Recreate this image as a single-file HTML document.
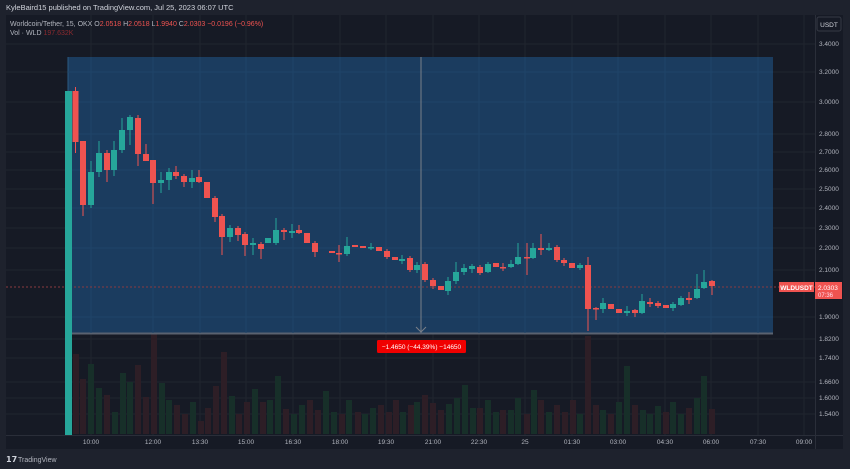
<!DOCTYPE html>
<html><head><meta charset="utf-8"><style>
html,body{margin:0;padding:0;background:#1e222d;width:850px;height:469px;overflow:hidden;font-family:"Liberation Sans",sans-serif}
svg{display:block}
</style></head><body>
<svg width="850" height="469" viewBox="0 0 850 469" xmlns="http://www.w3.org/2000/svg" font-family="Liberation Sans, sans-serif">
<rect width="850" height="469" fill="#1e222d"/>
<text x="6" y="10" font-size="7.5" fill="#d1d4dc">KyleBaird15 published on TradingView.com, Jul 25, 2023 06:07 UTC</text>
<rect x="6" y="15" width="837" height="434" fill="#161a25"/>
<g stroke="#20252f" stroke-width="1">
<line x1="6" y1="44" x2="815" y2="44"/><line x1="6" y1="72" x2="815" y2="72"/><line x1="6" y1="102" x2="815" y2="102"/><line x1="6" y1="134" x2="815" y2="134"/><line x1="6" y1="152" x2="815" y2="152"/><line x1="6" y1="170" x2="815" y2="170"/><line x1="6" y1="189" x2="815" y2="189"/><line x1="6" y1="208" x2="815" y2="208"/><line x1="6" y1="228" x2="815" y2="228"/><line x1="6" y1="248" x2="815" y2="248"/><line x1="6" y1="270" x2="815" y2="270"/><line x1="6" y1="317" x2="815" y2="317"/><line x1="6" y1="339" x2="815" y2="339"/><line x1="6" y1="358" x2="815" y2="358"/><line x1="6" y1="382" x2="815" y2="382"/><line x1="6" y1="398" x2="815" y2="398"/><line x1="6" y1="414" x2="815" y2="414"/>
<line x1="91" y1="15" x2="91" y2="435"/><line x1="153" y1="15" x2="153" y2="435"/><line x1="200" y1="15" x2="200" y2="435"/><line x1="246" y1="15" x2="246" y2="435"/><line x1="293" y1="15" x2="293" y2="435"/><line x1="340" y1="15" x2="340" y2="435"/><line x1="386" y1="15" x2="386" y2="435"/><line x1="433" y1="15" x2="433" y2="435"/><line x1="479" y1="15" x2="479" y2="435"/><line x1="525" y1="15" x2="525" y2="435"/><line x1="572" y1="15" x2="572" y2="435"/><line x1="618" y1="15" x2="618" y2="435"/><line x1="665" y1="15" x2="665" y2="435"/><line x1="711" y1="15" x2="711" y2="435"/><line x1="758" y1="15" x2="758" y2="435"/><line x1="804" y1="15" x2="804" y2="435"/>
</g>
<g fill="#2d1e26">
<rect x="73" y="354" width="6" height="80"/><rect x="80" y="379" width="6" height="55"/><rect x="104" y="395" width="6" height="39"/><rect x="135" y="365" width="6" height="69"/><rect x="143" y="397" width="6" height="37"/><rect x="151" y="330" width="6" height="104"/><rect x="174" y="405" width="6" height="29"/><rect x="182" y="414" width="6" height="20"/><rect x="198" y="421" width="6" height="13"/><rect x="205" y="408" width="6" height="26"/><rect x="213" y="386" width="6" height="48"/><rect x="221" y="352" width="6" height="82"/><rect x="236" y="414" width="6" height="20"/><rect x="244" y="402" width="6" height="32"/><rect x="260" y="402" width="6" height="32"/><rect x="283" y="409" width="6" height="25"/><rect x="307" y="400" width="6" height="34"/><rect x="315" y="410" width="6" height="24"/><rect x="339" y="414" width="6" height="20"/><rect x="355" y="412" width="6" height="22"/><rect x="378" y="405" width="6" height="29"/><rect x="386" y="412" width="6" height="22"/><rect x="393" y="400" width="6" height="34"/><rect x="408" y="405" width="6" height="29"/><rect x="422" y="395" width="6" height="39"/><rect x="430" y="403" width="6" height="31"/><rect x="438" y="410" width="6" height="24"/><rect x="477" y="408" width="6" height="26"/><rect x="500" y="410" width="6" height="24"/><rect x="524" y="414" width="6" height="20"/><rect x="538" y="400" width="6" height="34"/><rect x="554" y="405" width="6" height="29"/><rect x="562" y="412" width="6" height="22"/><rect x="570" y="400" width="6" height="34"/><rect x="585" y="336" width="6" height="98"/><rect x="593" y="405" width="6" height="29"/><rect x="608" y="414" width="6" height="20"/><rect x="632" y="405" width="6" height="29"/><rect x="663" y="412" width="6" height="22"/><rect x="686" y="408" width="6" height="26"/><rect x="709" y="409" width="6" height="25"/>
</g>
<g fill="#172f29">
<rect x="88" y="364" width="6" height="70"/><rect x="96" y="388" width="6" height="46"/><rect x="112" y="412" width="6" height="22"/><rect x="120" y="373" width="6" height="61"/><rect x="127" y="382" width="6" height="52"/><rect x="159" y="383" width="6" height="51"/><rect x="166" y="400" width="6" height="34"/><rect x="190" y="402" width="6" height="32"/><rect x="229" y="396" width="6" height="38"/><rect x="252" y="389" width="6" height="45"/><rect x="267" y="400" width="6" height="34"/><rect x="275" y="376" width="6" height="58"/><rect x="291" y="414" width="6" height="20"/><rect x="299" y="405" width="6" height="29"/><rect x="323" y="391" width="6" height="43"/><rect x="331" y="412" width="6" height="22"/><rect x="346" y="400" width="6" height="34"/><rect x="362" y="414" width="6" height="20"/><rect x="370" y="408" width="6" height="26"/><rect x="400" y="412" width="6" height="22"/><rect x="414" y="402" width="6" height="32"/><rect x="446" y="404" width="6" height="30"/><rect x="454" y="398" width="6" height="36"/><rect x="462" y="385" width="6" height="49"/><rect x="470" y="408" width="6" height="26"/><rect x="485" y="400" width="6" height="34"/><rect x="493" y="412" width="6" height="22"/><rect x="508" y="410" width="6" height="24"/><rect x="515" y="398" width="6" height="36"/><rect x="531" y="390" width="6" height="44"/><rect x="546" y="412" width="6" height="22"/><rect x="577" y="414" width="6" height="20"/><rect x="600" y="410" width="6" height="24"/><rect x="616" y="402" width="6" height="32"/><rect x="624" y="366" width="6" height="68"/><rect x="640" y="410" width="6" height="24"/><rect x="647" y="414" width="6" height="20"/><rect x="655" y="406" width="6" height="28"/><rect x="670" y="402" width="6" height="32"/><rect x="678" y="414" width="6" height="20"/><rect x="694" y="398" width="6" height="36"/><rect x="701" y="376" width="6" height="58"/>
</g>
<rect x="68" y="57" width="705" height="277" fill="#1b3c5f"/>
<line x1="68" y1="333.5" x2="773" y2="333.5" stroke="#5a6270" stroke-width="2"/>
<line x1="68" y1="57" x2="68" y2="335" stroke="#2b5a82"/>
<g stroke="#1f4468" stroke-width="1">
<line x1="68" y1="72" x2="773" y2="72"/><line x1="68" y1="102" x2="773" y2="102"/><line x1="68" y1="134" x2="773" y2="134"/><line x1="68" y1="170" x2="773" y2="170"/><line x1="68" y1="208" x2="773" y2="208"/><line x1="68" y1="248" x2="773" y2="248"/><line x1="68" y1="317" x2="773" y2="317"/>
<line x1="91" y1="57" x2="91" y2="333"/><line x1="153" y1="57" x2="153" y2="333"/><line x1="200" y1="57" x2="200" y2="333"/><line x1="246" y1="57" x2="246" y2="333"/><line x1="293" y1="57" x2="293" y2="333"/><line x1="340" y1="57" x2="340" y2="333"/><line x1="386" y1="57" x2="386" y2="333"/><line x1="479" y1="57" x2="479" y2="333"/><line x1="525" y1="57" x2="525" y2="333"/><line x1="572" y1="57" x2="572" y2="333"/><line x1="618" y1="57" x2="618" y2="333"/><line x1="665" y1="57" x2="665" y2="333"/><line x1="711" y1="57" x2="711" y2="333"/><line x1="758" y1="57" x2="758" y2="333"/>
</g>
<line x1="421" y1="57" x2="421" y2="333" stroke="#7a7f88" stroke-width="1"/>
<path d="M416 327 L421 332 L426 327" stroke="#7a7f88" fill="none"/>
<line x1="6" y1="287" x2="815" y2="287" stroke="#8a3a40" stroke-width="1" stroke-dasharray="2,2"/>
<g stroke="#26a69a" stroke-width="1">
<line x1="91" y1="161" x2="91" y2="208"/><line x1="99" y1="141" x2="99" y2="177"/><line x1="114" y1="141" x2="114" y2="176"/><line x1="122" y1="118" x2="122" y2="153"/><line x1="130" y1="115" x2="130" y2="145"/><line x1="161" y1="172" x2="161" y2="193"/><line x1="169" y1="168" x2="169" y2="190"/><line x1="192" y1="170" x2="192" y2="188"/><line x1="230" y1="225" x2="230" y2="242"/><line x1="253" y1="238" x2="253" y2="255"/><line x1="276" y1="218" x2="276" y2="245"/><line x1="292" y1="224" x2="292" y2="238"/><line x1="347" y1="237" x2="347" y2="256"/><line x1="371" y1="243" x2="371" y2="250"/><line x1="402" y1="255" x2="402" y2="264"/><line x1="417" y1="262" x2="417" y2="273"/><line x1="448" y1="277" x2="448" y2="295"/><line x1="456" y1="262" x2="456" y2="284"/><line x1="464" y1="264" x2="464" y2="275"/><line x1="472" y1="264" x2="472" y2="273"/><line x1="488" y1="262" x2="488" y2="273"/><line x1="511" y1="260" x2="511" y2="268"/><line x1="518" y1="243" x2="518" y2="265"/><line x1="533" y1="243" x2="533" y2="259"/><line x1="549" y1="243" x2="549" y2="251"/><line x1="580" y1="263" x2="580" y2="270"/><line x1="603" y1="298" x2="603" y2="313"/><line x1="627" y1="306" x2="627" y2="316"/><line x1="642" y1="294" x2="642" y2="314"/><line x1="673" y1="302" x2="673" y2="311"/><line x1="681" y1="296" x2="681" y2="306"/><line x1="697" y1="274" x2="697" y2="299"/><line x1="704" y1="270" x2="704" y2="289"/>
</g>
<g stroke="#ef5350" stroke-width="1">
<line x1="75.5" y1="87" x2="75.5" y2="153"/><line x1="83" y1="141" x2="83" y2="216"/><line x1="107" y1="150" x2="107" y2="182"/><line x1="138" y1="115" x2="138" y2="166"/><line x1="146" y1="144" x2="146" y2="161"/><line x1="153" y1="160" x2="153" y2="204"/><line x1="176" y1="166" x2="176" y2="179"/><line x1="184" y1="174" x2="184" y2="187"/><line x1="199" y1="170" x2="199" y2="183"/><line x1="215" y1="196" x2="215" y2="222"/><line x1="222" y1="214" x2="222" y2="255"/><line x1="238" y1="226" x2="238" y2="241"/><line x1="245" y1="232" x2="245" y2="256"/><line x1="261" y1="242" x2="261" y2="259"/><line x1="284" y1="228" x2="284" y2="240"/><line x1="299" y1="225" x2="299" y2="234"/><line x1="315" y1="241" x2="315" y2="257"/><line x1="339" y1="245" x2="339" y2="262"/><line x1="387" y1="249" x2="387" y2="259"/><line x1="410" y1="256" x2="410" y2="272"/><line x1="425" y1="262" x2="425" y2="282"/><line x1="433" y1="278" x2="433" y2="289"/><line x1="480" y1="265" x2="480" y2="275"/><line x1="503" y1="263" x2="503" y2="271"/><line x1="527" y1="243" x2="527" y2="275"/><line x1="541" y1="234" x2="541" y2="255"/><line x1="557" y1="245" x2="557" y2="262"/><line x1="564" y1="258" x2="564" y2="266"/><line x1="588" y1="257" x2="588" y2="331"/><line x1="596" y1="307" x2="596" y2="320"/><line x1="635" y1="309" x2="635" y2="317"/><line x1="650" y1="298" x2="650" y2="307"/><line x1="658" y1="301" x2="658" y2="308"/><line x1="689" y1="292" x2="689" y2="304"/><line x1="712" y1="280" x2="712" y2="295"/>
</g>
<g fill="#26a69a">
<rect x="65" y="91" width="7" height="344"/>
<rect x="88" y="172" width="6" height="33"/><rect x="96" y="153" width="6" height="19"/><rect x="111" y="150" width="6" height="20"/><rect x="119" y="130" width="6" height="20"/><rect x="127" y="117" width="6" height="13"/><rect x="158" y="180" width="6" height="3"/><rect x="166" y="172" width="6" height="8"/><rect x="189" y="178" width="6" height="4"/><rect x="227" y="228" width="6" height="9"/><rect x="250" y="243" width="6" height="2"/><rect x="265" y="238" width="6" height="5"/><rect x="273" y="230" width="6" height="13"/><rect x="289" y="231" width="6" height="2"/><rect x="344" y="246" width="6" height="8"/><rect x="368" y="247" width="6" height="1.5"/><rect x="399" y="259" width="6" height="2"/><rect x="414" y="265" width="6" height="5"/><rect x="445" y="281" width="6" height="10"/><rect x="453" y="272" width="6" height="9"/><rect x="461" y="268" width="6" height="4"/><rect x="469" y="266" width="6" height="3"/><rect x="485" y="264" width="6" height="8"/><rect x="508" y="264" width="6" height="3"/><rect x="515" y="257" width="6" height="7"/><rect x="530" y="248" width="6" height="10"/><rect x="546" y="248" width="6" height="2"/><rect x="577" y="265" width="6" height="3"/><rect x="600" y="303" width="6" height="6"/><rect x="624" y="311" width="6" height="2"/><rect x="639" y="301" width="6" height="12"/><rect x="670" y="304" width="6" height="4"/><rect x="678" y="298" width="6" height="7"/><rect x="694" y="289" width="6" height="9"/><rect x="701" y="282" width="6" height="6"/>
</g>
<g fill="#ef5350">
<rect x="72.5" y="91" width="6" height="51"/><rect x="80" y="141" width="6" height="64"/><rect x="104" y="153" width="6" height="17"/><rect x="135" y="118" width="6" height="36"/><rect x="143" y="154" width="6" height="7"/><rect x="150" y="160" width="6" height="23"/><rect x="173" y="172" width="6" height="4"/><rect x="181" y="176" width="6" height="6"/><rect x="196" y="177" width="6" height="5"/><rect x="204" y="182" width="6" height="16"/><rect x="212" y="198" width="6" height="19"/><rect x="219" y="216" width="6" height="21"/><rect x="235" y="228" width="6" height="7"/><rect x="242" y="234" width="6" height="11"/><rect x="258" y="244" width="6" height="5"/><rect x="281" y="230" width="6" height="2"/><rect x="296" y="230" width="6" height="3"/><rect x="304" y="233" width="6" height="10"/><rect x="312" y="243" width="6" height="9"/><rect x="329" y="251" width="6" height="2"/><rect x="336" y="253" width="6" height="1.5"/><rect x="352" y="245" width="6" height="2"/><rect x="360" y="246" width="6" height="2"/><rect x="376" y="247" width="6" height="4"/><rect x="384" y="251" width="6" height="6"/><rect x="392" y="257" width="6" height="3"/><rect x="407" y="258" width="6" height="12"/><rect x="422" y="264" width="6" height="16"/><rect x="430" y="280" width="6" height="6"/><rect x="438" y="286" width="6" height="4"/><rect x="477" y="267" width="6" height="6"/><rect x="493" y="263" width="6" height="4"/><rect x="500" y="267" width="6" height="1.5"/><rect x="524" y="257" width="6" height="1.5"/><rect x="538" y="248" width="6" height="2"/><rect x="554" y="247" width="6" height="13"/><rect x="561" y="260" width="6" height="3"/><rect x="569" y="263" width="6" height="5"/><rect x="585" y="265" width="6" height="44"/><rect x="593" y="308" width="6" height="1.5"/><rect x="608" y="304" width="6" height="5"/><rect x="616" y="309" width="6" height="4"/><rect x="632" y="310" width="6" height="3"/><rect x="647" y="302" width="6" height="2"/><rect x="655" y="303" width="6" height="3"/><rect x="663" y="305" width="6" height="3"/><rect x="686" y="298" width="6" height="2"/><rect x="709" y="281" width="6" height="5"/>
</g>
<line x1="6" y1="435.5" x2="843" y2="435.5" stroke="#2a2e39"/>
<line x1="815.5" y1="15" x2="815.5" y2="449" stroke="#2a2e39"/>
<g font-size="6.5" fill="#b2b5be">
<text x="819" y="46">3.4000</text><text x="819" y="74">3.2000</text><text x="819" y="104">3.0000</text><text x="819" y="136">2.8000</text><text x="819" y="154">2.7000</text><text x="819" y="172">2.6000</text><text x="819" y="191">2.5000</text><text x="819" y="210">2.4000</text><text x="819" y="230">2.3000</text><text x="819" y="250">2.2000</text><text x="819" y="272">2.1000</text><text x="819" y="319">1.9000</text><text x="819" y="341">1.8200</text><text x="819" y="360">1.7400</text><text x="819" y="384">1.6600</text><text x="819" y="400">1.6000</text><text x="819" y="416">1.5400</text>
</g>
<g font-size="6.5" fill="#b2b5be" text-anchor="middle">
<text x="91" y="444">10:00</text><text x="153" y="444">12:00</text><text x="200" y="444">13:30</text><text x="246" y="444">15:00</text><text x="293" y="444">16:30</text><text x="340" y="444">18:00</text><text x="386" y="444">19:30</text><text x="433" y="444">21:00</text><text x="479" y="444">22:30</text><text x="525" y="444">25</text><text x="572" y="444">01:30</text><text x="618" y="444">03:00</text><text x="665" y="444">04:30</text><text x="711" y="444">06:00</text><text x="758" y="444">07:30</text><text x="804" y="444">09:00</text>
</g>
<rect x="817" y="17" width="24" height="14" rx="2" fill="#161a25" stroke="#363a45"/>
<text x="829" y="27" font-size="6.5" fill="#d1d4dc" text-anchor="middle">USDT</text>
<rect x="779" y="282" width="35" height="10" fill="#ef5350"/>
<text x="796.5" y="290" font-size="6.5" fill="#fff" text-anchor="middle" font-weight="bold">WLDUSDT</text>
<rect x="815" y="282" width="27" height="17" fill="#ef5350"/>
<text x="818" y="290" font-size="6.5" fill="#fff">2.0303</text>
<text x="818" y="297" font-size="6" fill="#fde">07:36</text>
<rect x="377" y="340" width="89" height="13" rx="1.5" fill="#f00000"/>
<text x="421.5" y="349" font-size="6.5" fill="#fff" text-anchor="middle">−1.4650 (−44.39%) −14650</text>
<text x="10" y="26" font-size="7" fill="#b2b5be">Worldcoin/Tether, 15, OKX  O<tspan fill="#ef5350">2.0518</tspan>  H<tspan fill="#ef5350">2.0518</tspan>  L<tspan fill="#ef5350">1.9940</tspan>  C<tspan fill="#ef5350">2.0303  −0.0196 (−0.96%)</tspan></text>
<text x="10" y="35" font-size="7" fill="#b2b5be">Vol · WLD  <tspan fill="#8b2a2f">197.632K</tspan></text>
<text x="6" y="462" font-size="8" fill="#d1d4dc" font-weight="bold">𝟭𝟳</text>
<text x="18" y="462" font-size="7" fill="#b2b5be">TradingView</text>
</svg>
</body></html>
